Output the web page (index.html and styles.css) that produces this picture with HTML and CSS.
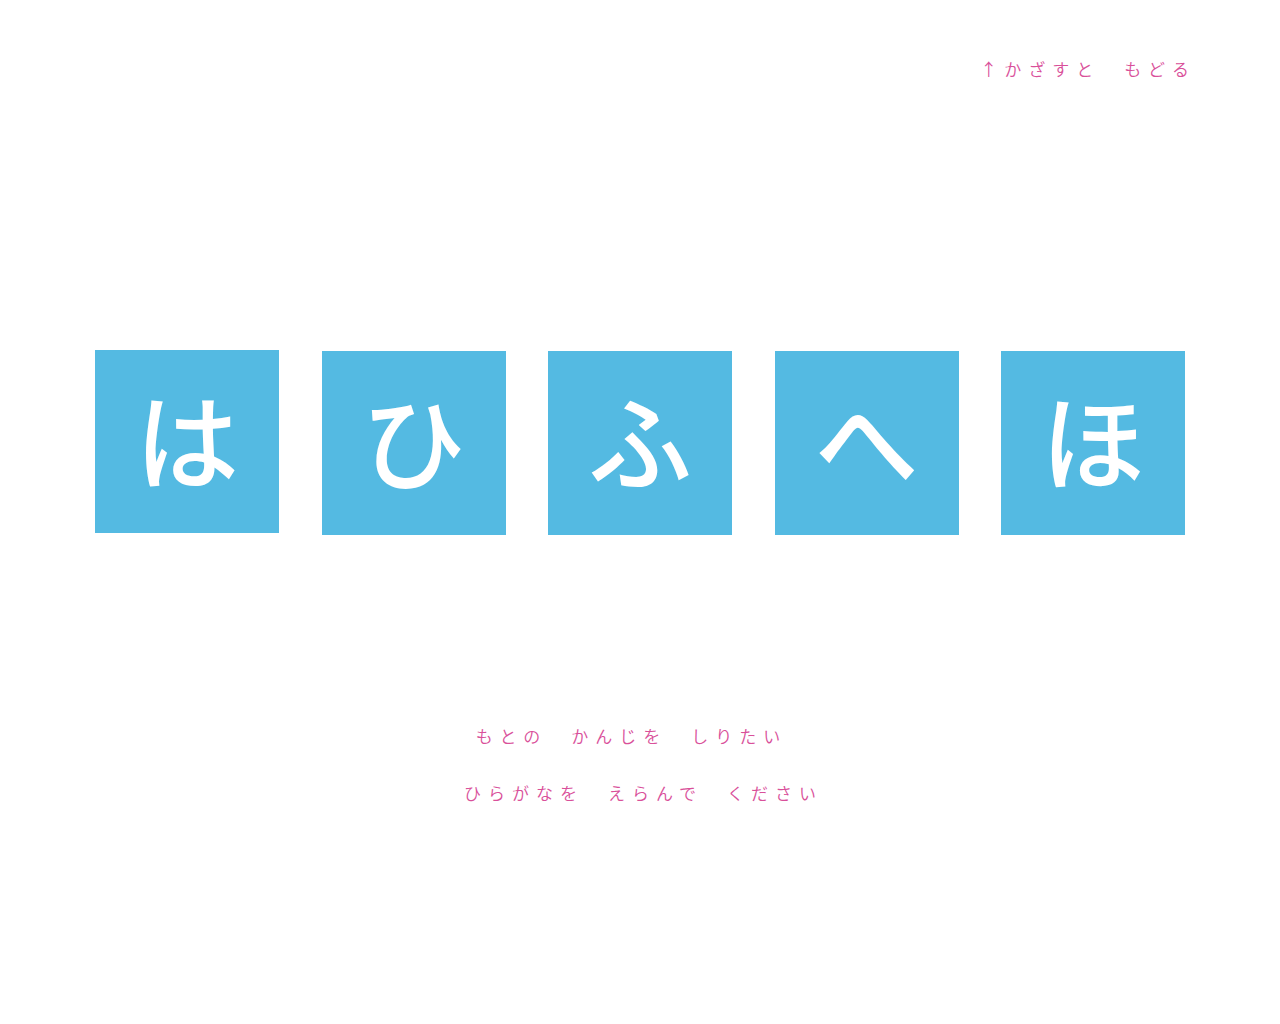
FILE: index.html
```html
<!DOCTYPE html>
<html lang="ja">
<head>
<meta charset="utf-8">
<title>ひらがな</title>
<link rel="stylesheet" href="styles.css">
</head>
<body>
<div class="page">
  <header class="topbar">
    <div class="back">↑かざすと　もどる</div>
  </header>
  <main class="main">
    <div class="row">
      <div class="tile tile-first">は</div>
      <div class="tile">ひ</div>
      <div class="tile">ふ</div>
      <div class="tile">へ</div>
      <div class="tile">ほ</div>
    </div>
    <div class="guide">
      <p class="line">もとの　かんじを　しりたい　</p>
      <p class="line">ひらがなを　えらんで　ください</p>
    </div>
  </main>
</div>
</body>
</html>
```

FILE: styles.css
```css
html, body {
  margin: 0;
  padding: 0;
  background: #ffffff;
}
.page {
  width: 1280px;
  height: 1024px;
  font-family: "Noto Sans CJK JP", "Noto Sans", sans-serif;
  color: #d9509a;
  display: flex;
  flex-direction: column;
}
.topbar {
  display: flex;
  justify-content: flex-end;
  padding: 56px 84px 0 0;
  height: 30px;
}
.back {
  font-size: 17px;
  font-weight: 350;
  letter-spacing: 7px;
  line-height: 25px;
}
.main {
  display: flex;
  flex-direction: column;
  align-items: center;
  padding-top: 264px;
}
.row {
  display: flex;
  gap: 42.5px;
  align-items: flex-start;
  align-self: flex-start;
  padding-left: 95px;
}
.tile {
  width: 184px;
  height: 184px;
  background: #54bae2;
  color: #ffffff;
  font-size: 104px;
  font-weight: 500;
  display: flex;
  align-items: center;
  justify-content: center;
  line-height: 1;
  margin-top: 1px;
  padding-bottom: 10px;
  box-sizing: border-box;
}
.tile-first {
  margin-top: 0;
  height: 183px;
}
.guide {
  margin-top: 189px;
  display: flex;
  flex-direction: column;
  align-items: center;
  gap: 33px;
}
.line {
  margin: 0;
  font-size: 17px;
  font-weight: 350;
  letter-spacing: 7px;
  line-height: 24px;
  padding-left: 7px;
}
```
